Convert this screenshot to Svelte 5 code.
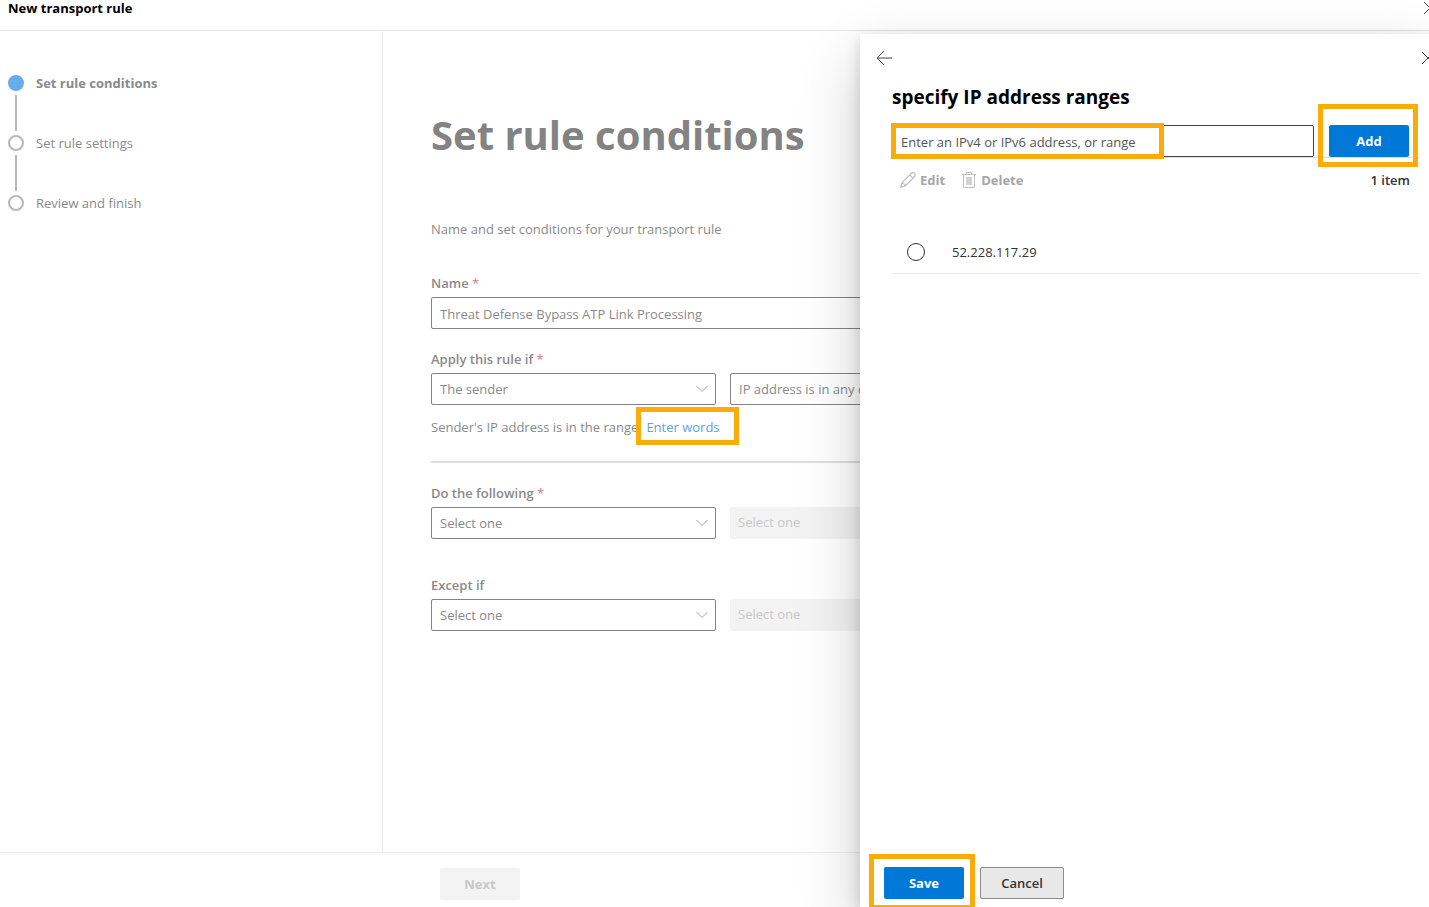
<script>
  const steps = [
    { label: 'Set rule conditions', current: true },
    { label: 'Set rule settings', current: false },
    { label: 'Review and finish', current: false }
  ];

  let name = $state('Threat Defense Bypass ATP Link Processing');
  let newRange = $state('');
  let ranges = $state(['52.228.117.29']);
  let selected = $state('');

  function addRange() {
    const value = newRange.trim();
    if (!value) return;
    ranges.push(value);
    newRange = '';
  }
</script>

{#snippet closeIcon()}
  <svg width="14" height="14" viewBox="0 0 14 14" fill="none" stroke="currentColor" aria-hidden="true">
    <path d="M1 1l12 12M13 1L1 13" />
  </svg>
{/snippet}

{#snippet dropdown(id, value, label)}
  <div class="dropdown">
    <select {id} aria-label={label}>
      <option>{value}</option>
    </select>
    <svg class="chevron" width="12" height="8" viewBox="0 0 12 8" fill="none" stroke="currentColor" aria-hidden="true">
      <path d="M0.5 1l5.5 5.5L11.5 1" />
    </svg>
  </div>
{/snippet}

<div class="page">
  <header class="topbar">
    <span class="topbar-title">New transport rule</span>
    <button class="icon-btn" aria-label="Close rule">{@render closeIcon()}</button>
  </header>

  <div class="body">
    <nav class="steps" aria-label="Steps">
      <ol>
        {#each steps as step}
          <li class:current={step.current}>
            <span class="dot"></span>
            <span>{step.label}</span>
          </li>
        {/each}
      </ol>
    </nav>

    <main>
      <h1>Set rule conditions</h1>
      <p class="intro">Name and set conditions for your transport rule</p>

      <div class="field">
        <label for="name">Name <span class="required">*</span></label>
        <input id="name" class="name-input" type="text" bind:value={name} />
      </div>

      <div class="field">
        <label for="apply">Apply this rule if <span class="required">*</span></label>
        <div class="pair">
          {@render dropdown('apply', 'The sender')}
          {@render dropdown('apply-detail', 'IP address is in any of these ranges or exactly matches', 'Condition')}
        </div>
        <p class="summary">
          <span>Sender's IP address is in the range</span>
          <a class="marked link-mark" href="#words">Enter words</a>
        </p>
      </div>

      <hr />

      <div class="field">
        <label for="action">Do the following <span class="required">*</span></label>
        <div class="pair">
          {@render dropdown('action', 'Select one')}
          <select class="off" aria-label="Action detail" disabled><option>Select one</option></select>
        </div>
      </div>

      <div class="field except">
        <label for="except">Except if</label>
        <div class="pair">
          {@render dropdown('except', 'Select one')}
          <select class="off" aria-label="Exception detail" disabled><option>Select one</option></select>
        </div>
      </div>
    </main>
  </div>

  <footer class="bottombar">
    <button class="next" disabled>Next</button>
  </footer>

  <aside class="panel" aria-label="specify IP address ranges">
    <div class="panel-nav">
      <button class="icon-btn" aria-label="Back">
        <svg width="16" height="16" viewBox="0 0 16 16" fill="none" stroke="currentColor" aria-hidden="true">
          <path d="M16 8H1M8 1L1 8l7 7" />
        </svg>
      </button>
      <button class="icon-btn" aria-label="Close panel">{@render closeIcon()}</button>
    </div>

    <div class="panel-body">
      <h2>specify IP address ranges</h2>
      <div class="add-row">
        <div class="range-box marked">
          <input
            type="text"
            aria-label="IP address or range"
            placeholder="Enter an IPv4 or IPv6 address, or range"
            bind:value={newRange}
          />
        </div>
        <span class="marked add-mark">
          <button class="primary" onclick={addRange}>Add</button>
        </span>
      </div>

      <div class="toolbar">
        <button class="tool" disabled>
          <svg width="16" height="16" viewBox="0 0 16 16" fill="none" stroke="currentColor" stroke-width="1.3" aria-hidden="true">
            <path d="M0.7 15.3l1.2-4.5L11.4 1.3a2.2 2.2 0 0 1 3.2 3.2L5.2 14zM1.9 10.8q2.8.4 3.3 3.2M9.800 2.900l3.300 3.300" />
          </svg>
          Edit
        </button>
        <button class="tool" disabled>
          <svg width="16" height="16" viewBox="0 0 16 16" fill="none" stroke="currentColor" aria-hidden="true">
            <path d="M1 2.5h14M5.5 2.5v-2h5v2M2.5 2.5v13h11v-13" />
            <path d="M5 5h6v8H5z" fill="#d2d2d2" stroke="none" />
          </svg>
          Delete
        </button>
        <span class="count">{ranges.length} item{ranges.length === 1 ? '' : 's'}</span>
      </div>

      <ul class="ranges">
        {#each ranges as range}
          <li>
            <label>
              <input type="radio" name="range" value={range} bind:group={selected} />
              {range}
            </label>
          </li>
        {/each}
      </ul>
    </div>

    <div class="panel-foot">
      <span class="marked save-mark"><button class="primary">Save</button></span>
      <button class="secondary">Cancel</button>
    </div>
  </aside>
</div>

<style>
  :global(body) {
    margin: 0;
    background: #fff;
  }

  .page {
    position: relative;
    display: flex;
    flex-direction: column;
    min-height: 100vh;
    overflow: hidden;
    font-family: 'Open Sans', 'Noto Sans', sans-serif;
    font-size: 13px;
    line-height: 20px;
    color: #8a8a8a;
  }

  .page *,
  .page *::after {
    box-sizing: border-box;
  }

  button,
  input,
  select {
    font: inherit;
    color: inherit;
    border-radius: 2px;
  }

  h1,
  h2,
  p,
  ol,
  ul {
    margin: 0;
    padding: 0;
    list-style: none;
  }

  .icon-btn {
    display: flex;
    padding: 0;
    border: 0;
    background: none;
    color: #444;
  }

  /* ─── Frame ─── */
  .topbar {
    display: flex;
    justify-content: space-between;
    align-items: flex-start;
    height: 31px;
    padding-left: 8px;
    border-bottom: 1px solid #e5e5e5;
    line-height: 16px;
  }

  .topbar .icon-btn {
    margin: 1px -8px 0 0;
  }

  .topbar-title {
    font-weight: 700;
    color: #000;
  }

  .body {
    flex: 1;
    display: flex;
  }

  .bottombar {
    padding: 15px 0 7px 440px;
    border-top: 1px solid #ededed;
  }

  .next {
    display: block;
    width: 80px;
    height: 32px;
    border: 0;
    background: #f3f3f3;
    color: #c8c8c8;
    font-weight: 700;
  }

  /* ─── Steps ─── */
  .steps {
    width: 383px;
    padding: 42px 8px;
    border-right: 1px solid #ededed;
  }

  .steps li {
    position: relative;
    display: flex;
    align-items: center;
    gap: 12px;
    margin-bottom: 40px;
  }

  .steps li:not(:last-child)::after {
    content: '';
    position: absolute;
    top: 22px;
    left: 7px;
    width: 2px;
    height: 36px;
    background: #b8b8b8;
  }

  .dot {
    width: 16px;
    height: 16px;
    border: 2px solid #b8b8b8;
    border-radius: 50%;
  }

  .current {
    font-weight: 700;
  }

  .current .dot {
    border-color: #66aee8;
    background: #66aee8;
  }

  /* ─── Form ─── */
  main {
    flex: 1;
    min-width: 0;
    padding: 76px 48px 0;
  }

  h1 {
    font-size: 40px;
    line-height: 56px;
    font-weight: 700;
    color: #838383;
  }

  .intro {
    margin: 56px 0 34px;
  }

  .field {
    margin-bottom: 20px;
  }

  .field > label {
    display: block;
    margin-bottom: 4px;
    font-weight: 600;
  }

  .required {
    font-weight: 400;
    color: #d4777c;
  }

  .name-input,
  .dropdown select {
    display: block;
    width: 100%;
    height: 32px;
    padding: 0 8px;
    border: 1px solid #838383;
    background: #fff;
  }

  .name-input {
    padding-top: 2px;
  }

  .pair {
    display: flex;
    gap: 14px;
  }

  .dropdown {
    position: relative;
    width: 285px;
  }

  select {
    appearance: none;
  }

  .dropdown select {
    padding-right: 32px;
    text-overflow: ellipsis;
  }

  .chevron {
    position: absolute;
    top: 12px;
    right: 8px;
    color: #a6a6a6;
    pointer-events: none;
  }

  .off {
    width: 285px;
    height: 32px;
    padding: 0 8px 2px;
    border: 0;
    background: #f3f3f3;
    color: #c8c8c8;
    opacity: 1;
  }

  .summary {
    display: flex;
    gap: 8px;
    margin: 12px 0 24px;
  }

  .summary a {
    color: #5ba6de;
    text-decoration: none;
  }

  hr {
    height: 2px;
    margin: 0 0 20px;
    border: 0;
    background: #dedede;
  }

  .except {
    margin-top: 36px;
  }

  /* ─── Orange call-out boxes ─── */
  .marked {
    position: relative;
  }

  .marked::after {
    content: '';
    position: absolute;
    border: 5px solid #f9ac0a;
    pointer-events: none;
  }

  .link-mark::after {
    inset: -10px -19px -8px -10px;
  }

  .range-box::after {
    top: -2px;
    left: -1px;
    width: 273px;
    height: 36px;
  }

  .add-mark::after {
    inset: -21px -9px -10px -11px;
  }

  .save-mark::after {
    inset: -13px -11px -11px -15px;
  }

  /* ─── Side panel ─── */
  .panel {
    position: absolute;
    inset: 34px 0 0 auto;
    display: flex;
    flex-direction: column;
    width: 569px;
    max-width: 100%;
    background: #fff;
    color: #333;
    box-shadow:
      0 26px 58px rgba(0, 0, 0, 0.2),
      0 5px 14px rgba(0, 0, 0, 0.16);
  }

  .panel-nav {
    display: flex;
    justify-content: space-between;
    align-items: center;
    margin-right: -6px;
    padding: 16px 0 0 16px;
  }

  .panel-body {
    flex: 1;
    padding: 17px 9px 0 32px;
  }

  h2 {
    margin-bottom: 14px;
    font-size: 19px;
    line-height: 28px;
    font-weight: 700;
    color: #000;
  }

  .add-row {
    display: flex;
    gap: 15px;
    padding-right: 10px;
    box-shadow: 0 1px #e1e1e1;
  }

  .range-box {
    flex: 1;
  }

  .range-box input {
    display: block;
    width: 100%;
    height: 32px;
    padding: 2px 8px 0;
    border: 1px solid #444;
    background: #fff;
  }

  .range-box input::placeholder {
    color: #555;
    opacity: 1;
  }

  .add-mark {
    margin-right: 1px;
  }

  .primary,
  .secondary {
    display: block;
    height: 32px;
    padding: 0;
    font-weight: 600;
  }

  .primary {
    width: 80px;
    border: 0;
    background: #0078d7;
    color: #fff;
    font-weight: 700;
  }

  .secondary {
    width: 84px;
    border: 1px solid #8a8a8a;
    background: #e8e8e8;
  }

  .toolbar {
    display: flex;
    align-items: center;
    gap: 16px;
    padding: 13px 10px 0 8px;
  }

  .tool {
    display: flex;
    align-items: center;
    gap: 4px;
    padding: 0;
    border: 0;
    background: none;
    color: #a6a6a6;
    font-weight: 700;
  }

  .tool svg {
    color: #c0c0c0;
  }

  .count {
    margin-left: auto;
    font-weight: 600;
  }

  .ranges {
    margin-top: 40px;
  }

  .ranges li {
    border-bottom: 1px solid #ededed;
  }

  .ranges label {
    display: flex;
    align-items: center;
    gap: 27px;
    height: 43px;
    padding-left: 15px;
  }

  .ranges input {
    appearance: none;
    width: 18px;
    height: 18px;
    margin: 0;
    border: 1px solid #333;
    border-radius: 50%;
    background: #fff;
  }

  .ranges input:checked {
    border: 5px solid #0078d7;
  }

  .panel-foot {
    display: flex;
    gap: 16px;
    padding: 0 24px 8px;
  }
</style>
